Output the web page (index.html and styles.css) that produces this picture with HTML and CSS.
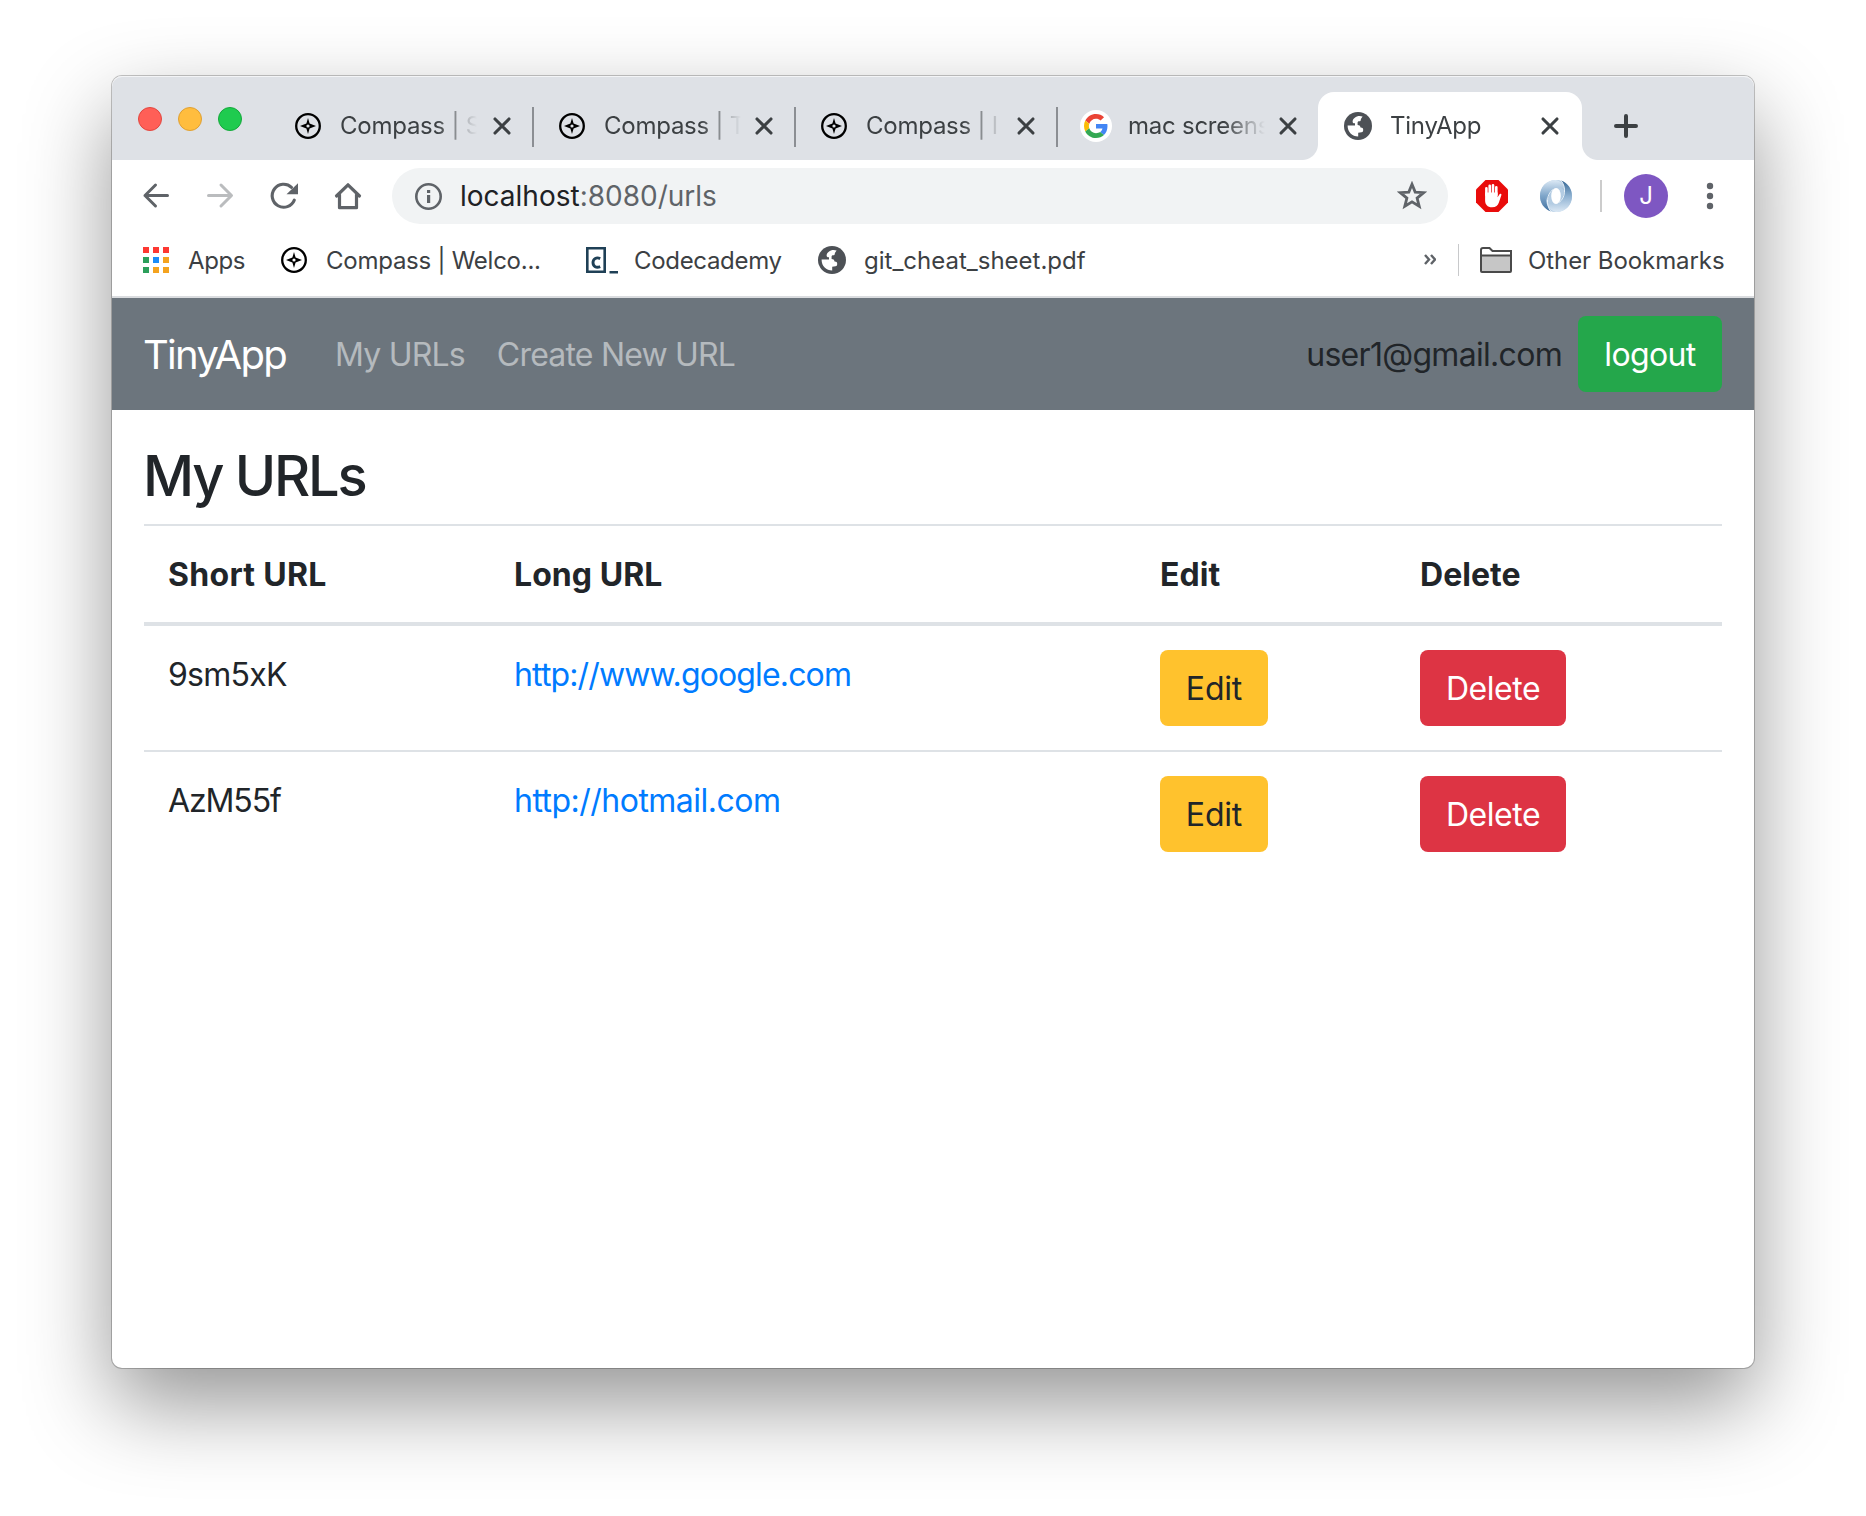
FILE: index.html
```
<!DOCTYPE html>
<html lang="en">
<head>
<meta charset="utf-8">
<title>TinyApp</title>
<link rel="stylesheet" href="styles.css">
</head>
<body>
<svg class="defs" aria-hidden="true">
  <symbol id="compass" viewBox="0 0 26 26">
    <circle cx="13" cy="13" r="11.8" fill="none" stroke="#000" stroke-width="2.3"/>
    <path fill="#000" fill-rule="evenodd" d="M13 5l1.6 5.6L21 13l-6.4 2.4L13 21l-1.6-5.6L5 13l6.4-2.4zM13 11.4a1.6 1.6 0 1 0 0 3.2 1.6 1.6 0 0 0 0-3.2z"/>
  </symbol>
  <symbol id="globe" viewBox="0 0 28 28">
    <circle cx="14" cy="14" r="14" fill="#4d5156"/>
    <path fill="#fff" d="M18.6 4.6C13.5 2.8 9 6 8.600 9.400c-.1 1.500 1 2.100 2.400 1.900v2.200H3.600C3.500 20 8.200 24.500 14.200 24.500v-3.800l3.300-.4c1.400-.2 1.700-1 1.700-2.600 0-1.700-1-2.400-2.700-2.300-.3-1.800-1.100-2.500-2.900-2.500V10.600c0-.9.700-1.300 1.700-1.300 1.200 0 1.600-.7 1.600-2.300z"/>
  </symbol>
  <symbol id="close" viewBox="0 0 24 24">
    <path d="M5 5l14 14M19 5L5 19" fill="none" stroke="#3c4043" stroke-width="3.1" stroke-linecap="round"/>
  </symbol>
</svg>
<main class="window">
  <header class="tabstrip">
    <div class="lights"><i class="light red"></i><i class="light amber"></i><i class="light green"></i></div>
    <div class="tab first"><svg class="fav"><use href="#compass"/></svg><span class="title">Compass | S</span><svg class="x"><use href="#close"/></svg></div>
    <div class="tab"><svg class="fav"><use href="#compass"/></svg><span class="title">Compass | T</span><svg class="x"><use href="#close"/></svg></div>
    <div class="tab"><svg class="fav"><use href="#compass"/></svg><span class="title">Compass | I</span><svg class="x"><use href="#close"/></svg></div>
    <div class="tab last"><svg class="google" viewBox="0 0 32 32"><circle cx="16" cy="16" r="16" fill="#fff"/><g transform="translate(4 4) scale(.5)"><path fill="#EA4335" d="M24 9.500c3.540 0 6.710 1.220 9.210 3.600l6.850-6.850C35.900 2.380 30.470 0 24 0 14.620 0 6.510 5.380 2.560 13.220l7.980 6.190C12.430 13.720 17.740 9.500 24 9.500z"/><path fill="#4285F4" d="M46.980 24.550c0-1.570-.15-3.090-.38-4.550H24v9.020h12.940c-.58 2.960-2.260 5.480-4.780 7.180l7.730 6c4.510-4.180 7.090-10.360 7.090-17.650z"/><path fill="#FBBC05" d="M10.530 28.590c-.48-1.450-.76-2.990-.76-4.590s.27-3.140.76-4.590l-7.980-6.190C.92 16.460 0 20.120 0 24c0 3.880.92 7.540 2.560 10.780l7.970-6.190z"/><path fill="#34A853" d="M24 48c6.480 0 11.930-2.130 15.890-5.810l-7.730-6c-2.150 1.450-4.920 2.300-8.160 2.300-6.260 0-11.570-4.220-13.470-9.910l-7.980 6.190C6.510 42.620 14.620 48 24 48z"/></g></svg><span class="title">mac screens</span><svg class="x"><use href="#close"/></svg></div>
    <div class="tab active"><svg class="fav globe"><use href="#globe"/></svg><span class="title">TinyApp</span><svg class="x"><use href="#close"/></svg></div>
    <svg class="plus" viewBox="0 0 24 24"><path d="M12 2v20M2 12h20" stroke="#3c4043" stroke-width="4" stroke-linecap="round"/></svg>
  </header>

  <div class="toolbar">
    <svg class="nav" viewBox="0 0 32 32"><path d="M27.500 15.500H5M15.500 5L5 15.500 15.500 26" fill="none" stroke="#5f6368" stroke-width="3" stroke-linecap="round" stroke-linejoin="round"/></svg>
    <svg class="nav" viewBox="0 0 32 32"><path d="M4.500 15.500H27M17 5l10.500 10.500L17 26" fill="none" stroke="#babcbe" stroke-width="3" stroke-linecap="round" stroke-linejoin="round"/></svg>
    <svg class="nav" viewBox="0 0 32 32"><path d="M26.300 20.200A11.500 11.500 0 1 1 23.500 7.300" fill="none" stroke="#5f6368" stroke-width="3.100" stroke-linecap="round"/><path d="M30 3.300v11H18.500z" fill="#5f6368"/></svg>
    <svg class="nav" viewBox="0 0 32 32"><path d="M4.500 16L16 4.800 27.500 16M7.500 14.500v13.200h17V14.500" fill="none" stroke="#5f6368" stroke-width="3.200" stroke-linecap="round" stroke-linejoin="round"/></svg>
    <div class="omnibox">
      <svg class="info" viewBox="0 0 27 27"><circle cx="13.500" cy="13.500" r="12.200" fill="none" stroke="#5f6368" stroke-width="2.600"/><path d="M12 7h3.200v3H12zM12 12h3.200v8H12z" fill="#5f6368"/></svg>
      <span class="address">localhost<span class="path">:8080/urls</span></span>
      <svg class="star" viewBox="0 0 30 30"><path d="M15 3.300l3.200 7.800 8.400.6-6.500 5.400 2.100 8.200-7.200-4.400-7.200 4.400 2.100-8.200-6.500-5.400 8.400-.6z" fill="none" stroke="#5f6368" stroke-width="2.800"/></svg>
    </div>
    <svg class="ext" viewBox="0 0 32 32"><path d="M9.500 0h13L32 9.500v13L22.500 32h-13L0 22.500v-13z" fill="#e90c0b"/><path d="M10.400 15V8.300M13.700 14V5.800M17 14V5.200M20.300 15V7.300" stroke="#fff" stroke-width="2.600" stroke-linecap="round"/><path d="M9.100 12.500h12.500v4.800l1.900-3c.8-1.100 2.300-.5 1.900.8l-2.500 7.400c-1 3-3 4.700-6.800 4.700-4.800 0-7-2.700-7-7z" fill="#fff"/></svg>
    <svg class="ext swirl" viewBox="0 0 32 32">
      <defs>
        <linearGradient id="s1" x1="0" y1="0" x2="0" y2="1"><stop offset="0" stop-color="#dce9f5"/><stop offset=".5" stop-color="#7fa6ca"/><stop offset="1" stop-color="#41709f"/></linearGradient>
        <linearGradient id="s2" x1="0" y1="0" x2="0" y2="1"><stop offset="0" stop-color="#356795"/><stop offset=".5" stop-color="#8fb2d2"/><stop offset="1" stop-color="#dce9f5"/></linearGradient>
      </defs>
      <circle cx="16" cy="16" r="16" fill="#b3cce3"/>
      <path d="M16 0C5 0 0 8 0 16c0 7 4 13 11 15.500C5 25 7 10 19 7.500 24 8.500 26 13 26 16 27 9 23 1 16 0z" fill="url(#s1)"/>
      <path d="M16 32c11 0 16-8 16-16 0-7-4-13-11-15.500C27 7 25 22 13 24.500 8 23.500 6 19 6 16 5 23 9 31 16 32z" fill="url(#s2)"/>
      <path d="M11 31.500C5.500 25 6.500 14 13 9.500" fill="none" stroke="#e6f0f8" stroke-width="1"/>
      <path d="M21 .5C26.500 7 25.500 18 19 22.500" fill="none" stroke="#e6f0f8" stroke-width="1"/>
      <ellipse cx="16" cy="16" rx="4.800" ry="8" fill="#fff"/>
    </svg>
    <i class="rule"></i>
    <span class="avatar">J</span>
    <svg class="dots" viewBox="0 0 8 28"><g fill="#5f6368"><circle cx="4" cy="4" r="3.200"/><circle cx="4" cy="14" r="3.200"/><circle cx="4" cy="24" r="3.200"/></g></svg>
  </div>

  <div class="bookmarks">
    <svg class="apps" viewBox="0 0 26 26"><path fill="#fd3832" d="M0 0h6v6H0zM10 0h6v6h-6zM20 0h6v6h-6z"/><path fill="#2c9f5b" d="M0 10h6v6H0zM0 20h6v6H0z"/><path fill="#1a8cf8" d="M10 10h6v6h-6z"/><path fill="#f4a31f" d="M20 10h6v6h-6zM10 20h6v6h-6zM20 20h6v6h-6z"/></svg>
    <span class="bm-apps">Apps</span>
    <svg class="compass"><use href="#compass"/></svg>
    <span class="bm-compass">Compass | Welco...</span>
    <svg class="codecademy" viewBox="0 0 32 28"><path d="M1.300 2.300h17.400v23.400H1.300z" fill="none" stroke="#1f4056" stroke-width="2.600"/><path d="M23.500 25h8.500v2.500h-8.500z" fill="#1f4056"/><path d="M14.200 12.600c-3.600-1.700-7.200-.1-7.200 4s3.400 5.700 7.200 4" fill="none" stroke="#1f4056" stroke-width="2.900"/></svg>
    <span class="bm-code">Codecademy</span>
    <svg class="bm-globe"><use href="#globe"/></svg>
    <span class="bm-git">git_cheat_sheet.pdf</span>
    <svg class="chevrons" viewBox="0 0 12 14"><path d="M1 2l4 4.500L1 11M7 2l4 4.500L7 11" fill="none" stroke="#5f6368" stroke-width="2.400"/></svg>
    <i class="bm-rule"></i>
    <svg class="folder" viewBox="0 0 32 26"><path d="M1 3q0-2 2-2h6.500l3 3H31v20q0 1-1 1H2q-1 0-1-1z" fill="#fff"/><path d="M1 8.500h30V25H1z" fill="#c6c6c6"/><path d="M1 8.500h30M1 3q0-2 2-2h6.500l3 3H31v20q0 1-1 1H2q-1 0-1-1z" fill="none" stroke="#4a4a4a" stroke-width="2"/></svg>
    <span class="bm-other">Other Bookmarks</span>
  </div>

  <nav class="navbar">
    <a class="brand">TinyApp</a>
    <a class="link">My URLs</a>
    <a class="link create">Create New URL</a>
    <span class="user">user1@gmail.com</span>
    <button class="btn success">logout</button>
  </nav>

  <section class="content">
    <h3>My URLs</h3>
    <table>
      <colgroup><col class="c-short"><col class="c-long"><col class="c-edit"><col class="c-delete"></colgroup>
      <thead><tr><th class="wide">Short URL</th><th>Long URL</th><th>Edit</th><th>Delete</th></tr></thead>
      <tbody>
        <tr><td>9sm5xK</td><td><a class="url long">http://www.google.com</a></td><td class="action"><button class="btn warning">Edit</button></td><td class="action"><button class="btn danger">Delete</button></td></tr>
        <tr><td class="tight">AzM55f</td><td><a class="url">http://hotmail.com</a></td><td class="action"><button class="btn warning">Edit</button></td><td class="action"><button class="btn danger">Delete</button></td></tr>
      </tbody>
    </table>
  </section>
</main>
</body>
</html>
```
FILE: styles.css
```
* { box-sizing: border-box; }
body {
  margin: 0;
  padding: 76px 112px 148px;
  background: #fff;
  color: #212529;
  font-family: Inter, "Liberation Sans", sans-serif;
}
svg { display: block; flex: none; }
.defs { display: none; }

.window {
  width: 1642px;
  height: 1292px;
  background: #fff;
  border-radius: 10px;
  box-shadow: 0 0 0 1px rgba(0, 0, 0, .22), 0 36px 86px rgba(0, 0, 0, .42);
}

/* Tab strip */
.tabstrip {
  display: flex;
  align-items: flex-end;
  height: 84px;
  background: #dee1e6;
  border-radius: 10px 10px 0 0;
  box-shadow: inset 0 1px 0 #f3f4f6;
  color: #3c4043;
  font-size: 24px;
}
.lights { display: flex; gap: 16px; width: 158px; padding-left: 26px; height: 53px; }
.light { width: 24px; height: 24px; border-radius: 50%; border: 1px solid; }
.red { background: #ff5f57; border-color: #e2463f; }
.amber { background: #ffbd3e; border-color: #dfa033; }
.green { background: #1fcb4f; border-color: #14a93b; }

.tab {
  position: relative;
  display: flex;
  align-items: center;
  width: 262px;
  height: 68px;
  padding: 0 20px 0 22px;
}
.tab.first { width: 264px; }
.tab.last { width: 260px; padding-right: 18px; }
.tab:not(.last):not(.active)::after {
  content: "";
  position: absolute;
  right: 0;
  top: 15px;
  width: 2px;
  height: 40px;
  background: #8b8e93;
}
.tab.active {
  width: 264px;
  padding-left: 24px;
  background: #fff;
  border-radius: 16px 16px 0 0;
}
.tab.active::before, .tab.active::after {
  content: "";
  position: absolute;
  bottom: 0;
  width: 16px;
  height: 16px;
}
.tab.active::before { left: -16px; background: radial-gradient(circle at 0 0, transparent 15.5px, #fff 16.5px); }
.tab.active::after { right: -16px; background: radial-gradient(circle at 100% 0, transparent 15.5px, #fff 16.5px); }
.fav { width: 26px; height: 26px; margin: 0 3px; }
.fav.globe { width: 28px; height: 28px; margin: 0 2px; }
.google { width: 32px; height: 32px; }
.title {
  flex: 1;
  margin: 0 10px 0 16px;
  padding-bottom: 2px;
  white-space: nowrap;
  overflow: hidden;
  letter-spacing: -.25px;
  -webkit-mask-image: linear-gradient(90deg, #000 96px, transparent 137px);
  mask-image: linear-gradient(90deg, #000 96px, transparent 137px);
}
.x { width: 24px; height: 24px; }
.plus { width: 24px; height: 24px; margin: 0 0 22px 32px; }

/* Toolbar */
.toolbar { display: flex; align-items: center; height: 72px; padding-left: 28px; }
.nav { width: 32px; height: 32px; margin-right: 32px; }
.nav:nth-child(4) { margin-right: 28px; }
.omnibox {
  display: flex;
  align-items: center;
  width: 1056px;
  height: 56px;
  margin-right: 28px;
  padding: 0 21px 0 23px;
  border-radius: 28px;
  background: #f1f3f4;
}
.info { width: 27px; height: 27px; margin-right: 18px; }
.address { flex: 1; font-size: 28px; color: #202124; }
.path { color: #5f6368; }
.star { width: 30px; height: 30px; }
.ext { width: 32px; height: 32px; margin-right: 32px; }
.ext.swirl { margin-right: 28px; }
.rule { width: 2px; height: 32px; margin-right: 22px; background: #ccc; }
.avatar {
  width: 44px;
  height: 44px;
  margin-right: 38px;
  border-radius: 50%;
  background: #7e57c2;
  color: #fff;
  font-size: 24px;
  line-height: 44px;
  text-align: center;
}
.dots { width: 8px; height: 28px; }

/* Bookmarks bar */
.bookmarks {
  display: flex;
  align-items: center;
  height: 66px;
  padding: 0 0 8px 31px;
  border-bottom: 2px solid #dadcdf;
  color: #3c4043;
  font-size: 24px;
  letter-spacing: -.25px;
  white-space: nowrap;
}
.apps { width: 26px; height: 26px; }
.bm-apps { width: 93px; margin-left: 19px; letter-spacing: -.4px; }
.compass { width: 26px; height: 26px; }
.bm-compass { width: 260px; margin-left: 19px; }
.codecademy { width: 32px; height: 28px; }
.bm-code { width: 184px; margin-left: 16px; letter-spacing: -.32px; }
.bm-globe { width: 28px; height: 28px; }
.bm-git { flex: 1; margin-left: 18px; letter-spacing: 0; }
.chevrons { width: 12px; height: 14px; margin-right: 22px; }
.bm-rule { width: 1px; height: 32px; margin-right: 21px; background: #c8c9cb; }
.folder { width: 32px; height: 26px; }
.bm-other { width: 226px; margin-left: 16px; letter-spacing: -.07px; }

/* App navbar */
.navbar {
  display: flex;
  align-items: center;
  height: 112px;
  padding: 0 32px;
  background: #6c757d;
  font-size: 32px;
  letter-spacing: -.8px;
}
.brand { width: 192px; margin-left: -1px; color: #fff; font-size: 40px; letter-spacing: -1.7px; }
.link { color: rgba(255, 255, 255, .5); }
.create { margin-left: 32px; }
.user { margin: 0 16px 0 auto; letter-spacing: -.7px; }

.btn {
  height: 76px;
  padding: 0;
  border: 0;
  border-radius: 8px;
  color: #fff;
  font: 400 32px Inter, "Liberation Sans", sans-serif;
  letter-spacing: -.46px;
}
.success { width: 144px; background: #24a74b; letter-spacing: -.63px; }
.warning { width: 108px; background: #ffc22d; color: #212529; letter-spacing: -.19px; }
.danger { width: 146px; background: #dd3444; }

/* Page content */
.content { padding: 32px; font-size: 32px; line-height: 48px; }
h3 {
  height: 66px;
  margin: 0 0 16px -1px;
  font-size: 56px;
  font-weight: 500;
  line-height: 69px;
  letter-spacing: -2.26px;
}
table { width: 1578px; table-layout: fixed; border-spacing: 0; }
.c-short { width: 346px; }
.c-long { width: 646px; }
.c-edit { width: 260px; }
.c-delete { width: 326px; }
th, td { padding: 25px 24px 23px; text-align: left; vertical-align: top; letter-spacing: -.74px; }
th { border-top: 2px solid #dee2e6; border-bottom: 4px solid #dee2e6; letter-spacing: .05px; }
th.wide { letter-spacing: .3px; }
td.tight { letter-spacing: -1.1px; }
td.action { padding: 24px; }
tr + tr td { border-top: 2px solid #dee2e6; }
td .btn { display: block; }
.url { color: #007bff; letter-spacing: -.52px; }
.url.long { letter-spacing: -.86px; }
```
